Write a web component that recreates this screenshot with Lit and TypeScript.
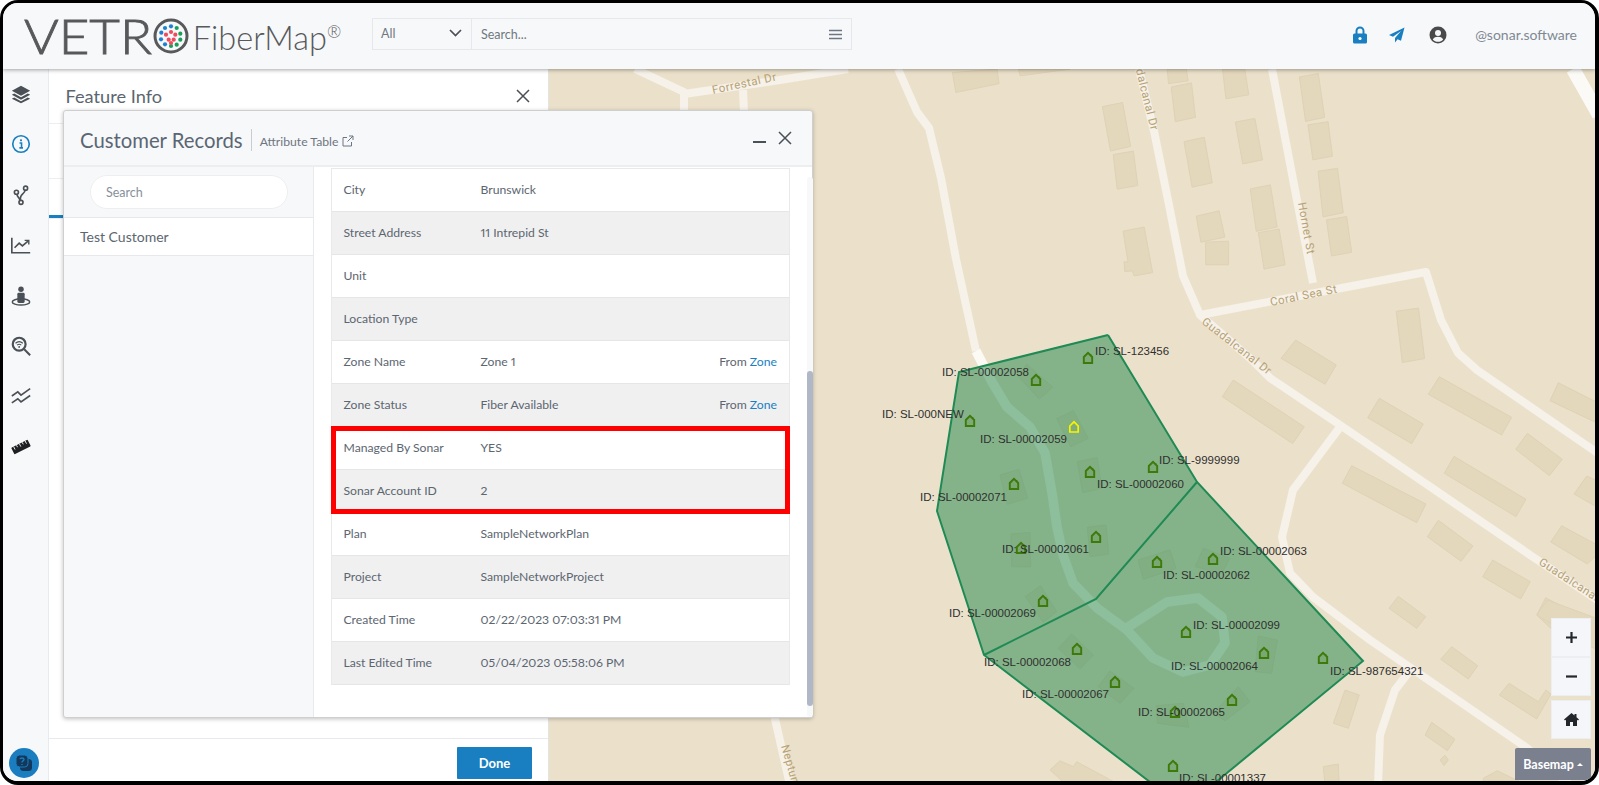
import { LitElement, html, css, svg } from 'lit';
import { customElement } from 'lit/decorators.js';

// buildings are read off crops of the map: [originX, originY, scale, points]
const BUILDINGS: [number, number, number, number[]][] = [
  [540, 60, 2.958, [1220, 37, 1352, 27, 1358, 70, 1230, 96]],
  [540, 60, 2.958, [1415, 27, 1568, 27, 1420, 47]],
  [1070, 60, 2.964, [288, 27, 345, 27, 350, 62, 292, 70]],
  [1070, 60, 2.964, [300, 80, 360, 68, 372, 170, 312, 183]],
  [1070, 60, 2.964, [452, 27, 518, 27, 530, 103, 462, 115]],
  [1070, 60, 2.964, [680, 50, 736, 40, 755, 170, 698, 182]],
  [1070, 60, 2.964, [705, 192, 765, 183, 778, 285, 720, 296]],
  [1070, 60, 2.964, [96, 138, 156, 126, 180, 256, 120, 270]],
  [1070, 60, 2.964, [128, 280, 188, 270, 201, 372, 140, 383]],
  [1070, 60, 2.964, [338, 242, 398, 229, 422, 364, 362, 377]],
  [1070, 60, 2.964, [490, 184, 548, 173, 571, 296, 512, 308]],
  [1070, 60, 2.964, [735, 330, 793, 321, 810, 453, 750, 465]],
  [1070, 60, 2.964, [760, 474, 820, 464, 835, 570, 775, 581]],
  [1070, 60, 2.964, [534, 382, 594, 370, 614, 495, 552, 508]],
  [1070, 60, 2.964, [558, 512, 620, 501, 638, 607, 575, 620]],
  [1070, 60, 2.964, [374, 463, 442, 447, 459, 525, 388, 540]],
  [1070, 60, 2.964, [402, 540, 470, 537, 470, 607, 402, 607]],
  [1070, 60, 2.964, [157, 507, 220, 495, 245, 630, 190, 640, 185, 625, 162, 627, 160, 598, 172, 598]],
  [1070, 60, 2.964, [967, 745, 1033, 735, 1051, 885, 985, 897]],
  [1180, 340, 3, [303, 55, 347, 0, 469, 75, 435, 133]],
  [1180, 340, 3, [127, 170, 160, 120, 373, 260, 338, 311]],
  [1180, 340, 3, [563, 233, 598, 175, 730, 252, 695, 311]],
  [1180, 340, 3, [745, 163, 778, 110, 995, 232, 965, 285]],
  [1180, 340, 3, [1007, 328, 1042, 280, 1147, 358, 1108, 407]],
  [1180, 340, 3, [1110, 182, 1135, 128, 1257, 190, 1257, 252]],
  [1180, 340, 3, [1182, 462, 1220, 408, 1257, 425, 1257, 505]],
  [1180, 340, 3, [487, 430, 515, 377, 738, 492, 710, 548]],
  [1180, 340, 3, [793, 400, 822, 349, 1038, 478, 1008, 530]],
  [1180, 340, 3, [742, 590, 775, 541, 879, 618, 843, 664]],
  [1180, 340, 3, [908, 710, 938, 660, 1051, 725, 1022, 777]],
  [1180, 340, 3, [1112, 606, 1145, 557, 1257, 618, 1257, 640, 1222, 672]],
  [1180, 340, 3, [627, 805, 655, 769, 737, 830, 710, 865]],
  [1180, 340, 3, [1070, 825, 1097, 773, 1257, 860, 1257, 900, 1150, 900]],
  [1440, 600, 3, [290, 45, 322, 0, 470, 55, 470, 150]],
  [1440, 600, 3, [2, 178, 35, 140, 113, 197, 85, 237]],
  [1440, 600, 3, [178, 285, 207, 250, 295, 305, 318, 270, 333, 282, 290, 357]],
  [1440, 600, 3, [-25, 367, 0, 385, 45, 418, 22, 452, -45, 405]],
  [1440, 600, 3, [0, 480, 15, 466, 25, 480, 12, 497]],
  [1440, 600, 3, [130, 535, 172, 512, 240, 545, 130, 560]],
  [920, 540, 3, [1275, 450, 1318, 465, 1285, 565, 1240, 550]],
  [920, 540, 3, [1210, 680, 1255, 672, 1258, 735, 1215, 735]],
  [920, 540, 3, [390, 690, 420, 662, 460, 680, 470, 665, 600, 735, 440, 735]],
  [860, 320, 3, [500, 132, 578, 202, 538, 237, 475, 170]],
  [860, 320, 3, [590, 296, 640, 272, 685, 355, 632, 380]],
  [860, 320, 3, [652, 425, 712, 413, 725, 505, 668, 518]],
  [860, 320, 3, [420, 465, 477, 448, 503, 535, 442, 553]],
  [860, 320, 3, [453, 642, 510, 637, 512, 740, 455, 740]],
  [860, 320, 3, [682, 622, 738, 615, 746, 702, 690, 710]],
  [860, 320, 3, [835, 725, 925, 690, 947, 745, 855, 775]],
  [920, 540, 3, [655, 60, 750, 30, 768, 85, 670, 118]],
  [920, 540, 3, [826, 80, 850, 25, 930, 55, 905, 100]],
  [920, 540, 3, [316, 170, 362, 137, 410, 215, 370, 247]],
  [920, 540, 3, [415, 325, 455, 282, 520, 345, 480, 387]],
  [920, 540, 3, [535, 440, 570, 393, 642, 445, 600, 490]],
  [920, 540, 3, [710, 497, 790, 490, 807, 562, 712, 550]],
  [920, 540, 3, [880, 520, 955, 440, 990, 485, 915, 542]],
  [920, 540, 3, [1015, 288, 1072, 300, 1055, 400, 1005, 395]],
];

const ROADS = [
  '635,69 684,92 684,112',
  '684,94 780,80 848,69',
  '743,90 744,112',
  '765,680 775,719 790,785',
  '898,69 917,112 929,128 941,178 956,259 976,351',
  '1139,69 1154,131 1169,205 1183,276 1200,315 1252,360 1270,378 1340,425 1533,557 1599,601',
  '1272,69 1296,195 1313,283',
  '1200,315 1426,272 1441,320 1458,353 1477,370 1599,454',
  '1340,427 1293,490 1282,537 1290,573 1313,597 1370,640 1440,688 1527,748 1570,785',
  '1412,668 1395,690 1380,735 1378,785',
];

// the street that runs under the service area reads wider and paler there
const INNER_ROAD = '976,351 992,382 1007,407 1030,427 1045,453 1052,493 1057,527 1063,555 1073,583 1097,608 1127,630 1153,658 1183,672 1210,665 1225,643 1222,617 1198,598 1167,602 1128,627';

const ROAD_LABELS: [string, number, number, number, string][] = [
  ['Forrestal Dr', 713, 94, -12, 'start'],
  ['Coral Sea St', 1271, 306, -11.5, 'start'],
  ['Hornet St', 1298, 203, 80, 'start'],
  ['Guadalcanal Dr', 1151, 131, 76, 'end'],
  ['Guadalcanal Dr', 1201, 323, 38, 'start'],
  ['Guadalcanal', 1538, 564, 33, 'start'],
  ['Neptune', 781, 746, 74, 'start'],
];

const HOUSES = [
  [1088, 358], [1036, 380], [970, 421], [1090, 472], [1153, 467], [1014, 484], [1096, 537], [1021, 548],
  [1157, 562], [1213, 559], [1043, 601], [1186, 632], [1077, 649], [1264, 653], [1323, 658], [1115, 682],
  [1232, 700], [1175, 712], [1173, 766],
];

const LABELS: [string, number, number][] = [
  ['ID: SL-123456', 1095, 351], ['ID: SL-00002058', 942, 372], ['ID: SL-000NEW', 882, 414],
  ['ID: SL-00002059', 980, 439], ['ID: SL-9999999', 1159, 460], ['ID: SL-00002060', 1097, 484],
  ['ID: SL-00002071', 920, 497], ['ID: SL-00002061', 1002, 549], ['ID: SL-00002063', 1220, 551],
  ['ID: SL-00002062', 1163, 575], ['ID: SL-00002069', 949, 613], ['ID: SL-00002099', 1193, 625],
  ['ID: SL-00002068', 984, 662], ['ID: SL-00002064', 1171, 666], ['ID: SL-987654321', 1330, 671],
  ['ID: SL-00002067', 1022, 694], ['ID: SL-00002065', 1138, 712], ['ID: SL-00001337', 1179, 778],
];

const ROWS: [string, string, boolean?][] = [
  ['City', 'Brunswick'],
  ['Street Address', '11 Intrepid St'],
  ['Unit', ''],
  ['Location Type', ''],
  ['Zone Name', 'Zone 1', true],
  ['Zone Status', 'Fiber Available', true],
  ['Managed By Sonar', 'YES'],
  ['Sonar Account ID', '2'],
  ['Plan', 'SampleNetworkPlan'],
  ['Project', 'SampleNetworkProject'],
  ['Created Time', '02/22/2023 07:03:31 PM'],
  ['Last Edited Time', '05/04/2023 05:58:06 PM'],
];

// fibre dots in the logo's O, relative to its centre
const DOTS: [number, number, string][] = [
  [0, -9.7, '#1f7fd0'], [-6, -8, '#1f7fd0'], [-9.7, -3.3, '#1f7fd0'], [-10, 3.3, '#1f7fd0'], [-6, 8.3, '#1f7fd0'],
  [5.7, -8, '#17a05a'], [9.3, -2.3, '#17a05a'], [9.3, 3.7, '#17a05a'], [5.7, 8.7, '#17a05a'], [0, 10, '#17a05a'],
  [0, -4, '#ee4c5c'], [-5, -1.3, '#ee4c5c'], [4.3, -1.3, '#ee4c5c'], [-2.3, 3.7, '#ee4c5c'], [2.7, 3.7, '#ee4c5c'], [0, 7, '#ee4c5c'],
];

const SIDE_ICONS = [
  svg`<path fill="#4b5056" d="M12 3l10 5.5L12 14 2 8.5z"/><path fill="#4b5056" d="M4.6 11.4l7.4 4.1 7.4-4.1 2.6 1.4-10 5.5-10-5.5z"/><path fill="#4b5056" d="M4.6 15.7l7.4 4.1 7.4-4.1 2.6 1.4-10 5-10-5z"/>`,
  svg`<circle cx="12" cy="12" r="9" fill="none" stroke="#1a7fc1" stroke-width="1.8"/><circle cx="12" cy="8" r="1.2" fill="#1a7fc1"/><path d="M10.4 11h2.2v5M10.2 16.2h4" fill="none" stroke="#1a7fc1" stroke-width="1.7"/>`,
  svg`<g fill="none" stroke="#4b5056" stroke-width="1.8"><circle cx="17" cy="4.5" r="2.2"/><circle cx="7" cy="9" r="2.2"/><circle cx="12" cy="20" r="2.2"/><path d="M16.5 6.8c-.5 5-6.500 3.500-5 11M7.500 11.200c.5 3 3 4 3.500 6.800"/></g>`,
  svg`<g fill="none" stroke="#4b5056" stroke-width="1.8"><path d="M2 4v16.500h20"/><path d="M5 15l5-5 3.500 3L20 7.500"/><path d="M16 7h4.500v4.500" stroke-width="1.500"/></g>`,
  svg`<circle cx="12" cy="4.500" r="3" fill="#4b5056"/><rect x="8" y="8.500" width="8" height="11" rx="1.500" fill="#4b5056"/><ellipse cx="12" cy="18.500" rx="9.500" ry="3.400" fill="none" stroke="#4b5056" stroke-width="1.600"/>`,
  svg`<g fill="none" stroke="#4b5056"><circle cx="10" cy="10" r="7" stroke-width="2.400"/><path d="M15.500 15.500L22 22" stroke-width="2.200"/><path d="M6 9c2.500-2.300 5.500-2.300 8 0M7.700 11c1.500-1.200 3.100-1.200 4.600 0" stroke-width="1.200"/></g><circle cx="10" cy="13" r="1" fill="#4b5056"/>`,
  svg`<g fill="none" stroke="#4b5056" stroke-width="1.800"><path d="M2 12l6.500-4.500 3.500 3.500L22 4"/><path d="M2 19.500l6.500-4.500 3.500 3.500L22 11.500"/></g>`,
  svg`<g transform="rotate(-27 12 12)"><rect x="2" y="8" width="20" height="8" rx=".8" fill="#1d1f22"/><path d="M5 8v3.500M8.500 8v2.500M12 8v3.500M15.500 8v2.500M19 8v3.500" stroke="#fff" stroke-width=".9"/></g>`,
];

@customElement('app-root')
export class AppRoot extends LitElement {
  static styles = css`
    :host {
      display: block;
      width: 1599px;
      height: 785px;
      font-family: 'Lato', 'Liberation Sans', sans-serif;
      color: #5c6670;
    }
    svg { display: block; }
    .shell {
      position: relative;
      box-sizing: border-box;
      height: 785px;
      border: solid #000;
      border-width: 3px 4px 4px 3px;
      border-radius: 18px;
      overflow: hidden;
      display: flex;
      flex-direction: column;
      background: #fff;
    }
    .topbar {
      position: relative;
      z-index: 3;
      flex: 0 0 66px;
      display: flex;
      align-items: center;
      background: #f7f8fa;
      box-shadow: 0 1px 4px rgba(0, 0, 0, .35);
    }
    .logo {
      display: flex;
      align-items: center;
      width: 366px;
      padding-left: 21px;
      box-sizing: border-box;
      color: #58595b;
    }
    /* the wordmark is wider than any installed face, so the letters are stretched */
    .vetro {
      font-size: 47px;
      font-weight: 300;
      line-height: 50px;
      -webkit-text-stroke: .8px #58595b;
      transform: scaleX(1.125);
      transform-origin: left center;
      margin-right: 15px;
    }
    .fiber { font-size: 32.500px; font-weight: 300; line-height: 40px; margin: 3px 0 0 4px; }
    .reg { font-size: 17px; font-weight: 300; align-self: flex-start; margin-top: 11px; line-height: 20px; }
    .search {
      display: flex;
      width: 480px;
      height: 32px;
      margin: 0 0 4px 3px;
      box-sizing: border-box;
      border: 1px solid #e6e8eb;
      font-size: 12.500px;
      color: #6f7880;
    }
    .search-all {
      flex: 0 0 99px;
      display: flex;
      align-items: center;
      justify-content: space-between;
      padding: 0 9px 2px 8px;
      box-sizing: border-box;
      border-right: 1px solid #e6e8eb;
    }
    .search-text {
      flex: 1;
      display: flex;
      align-items: center;
      justify-content: space-between;
      padding: 0 9px;
    }
    .top-right {
      margin: 0 0 3px auto;
      display: flex;
      align-items: center;
      padding-right: 18px;
    }
    .user-name { font-size: 14px; color: #7f8993; margin-left: 28px; }
    .main { flex: 1; display: flex; min-height: 0; }
    .sidebar {
      flex: 0 0 45.500px;
      box-sizing: border-box;
      background: #f7f8fa;
      border-right: 1px solid #e8eaed;
      display: flex;
      flex-direction: column;
      align-items: center;
      padding: 14px 9px 0 0;
      gap: 28.400px;
    }
    .help {
      position: absolute;
      left: 6px;
      bottom: 3px;
      width: 30px;
      height: 30px;
      border-radius: 50%;
      background: #1a7dc0;
      display: flex;
      align-items: center;
      justify-content: center;
    }
    .panel {
      flex: 0 0 500.500px;
      box-sizing: border-box;
      background: #fff;
      border-right: 1px solid #e3e3e3;
      display: flex;
      flex-direction: column;
    }
    .panel-head {
      flex: 0 0 55px;
      box-sizing: border-box;
      display: flex;
      justify-content: space-between;
      align-items: center;
      padding: 0 18px 0 17px;
      border-bottom: 1px solid #eceef0;
      font-size: 18.200px;
    }
    .panel-sub { flex: 0 0 55px; box-sizing: border-box; border-bottom: 1px solid #eceef0; }
    .panel-tabs { flex: 0 0 40px; box-sizing: border-box; display: flex; align-items: flex-end; border-bottom: 1px solid #eceef0; }
    .tab-line { width: 15px; height: 3px; background: #1a7fc1; }
    .panel-rest { flex: 1; }
    .panel-foot {
      flex: 0 0 43px;
      box-sizing: border-box;
      border-top: 1px solid #e8eaed;
      display: flex;
      justify-content: flex-end;
      padding: 8px 16px 0 0;
    }
    .done {
      width: 75px;
      height: 32px;
      background: #1a7fc1;
      color: #fff;
      font-size: 13px;
      font-weight: 700;
      display: flex;
      align-items: center;
      justify-content: center;
      border-radius: 1px;
    }
    .map { flex: 1; position: relative; overflow: hidden; background: #ebe1cb; }
    .road-label { font-family: 'Roboto', 'Liberation Sans', sans-serif; font-size: 11.500px; letter-spacing: .5px; fill: #b7a273; }
    .feat-label { font-family: 'Liberation Sans', sans-serif; font-size: 11.500px; fill: #2f2f2f; }
    .map-btns {
      position: absolute;
      right: 4px;
      bottom: 42px;
      display: flex;
      flex-direction: column;
      width: 40px;
    }
    .map-btn {
      height: 39px;
      box-sizing: border-box;
      background: #f5f6fa;
      border: 1px solid #eceef2;
      display: flex;
      align-items: center;
      justify-content: center;
    }
    .map-btn.sep { margin-top: 4px; }
    .basemap {
      position: absolute;
      right: 4px;
      bottom: 1px;
      width: 76px;
      height: 32px;
      background: #7b808f;
      color: #fff;
      font-size: 12.500px;
      font-weight: 700;
      display: flex;
      align-items: center;
      justify-content: center;
      gap: 3px;
      border-radius: 2px 2px 0 0;
    }
    .caret { width: 0; height: 0; border: 3.500px solid transparent; border-top: 0; border-bottom: 3.500px solid #fff; }
    .modal {
      position: absolute;
      z-index: 2;
      left: 60px;
      top: 107px;
      width: 750px;
      height: 608px;
      box-sizing: border-box;
      background: #f7f8fa;
      border: 1px solid #cfcfcf;
      border-radius: 3px;
      box-shadow: 0 1px 4px rgba(0, 0, 0, .25);
      display: flex;
      flex-direction: column;
    }
    .modal-head {
      flex: 0 0 56px;
      box-sizing: border-box;
      display: flex;
      align-items: center;
      padding: 0 20px 0 16px;
      border-bottom: 2px solid #eceef0;
    }
    .modal-title { font-size: 20.300px; color: #5a6673; padding-right: 8px; border-right: 1px solid #c9cdd1; line-height: 22px; margin-top: 3px; }
    .attr { font-size: 12.200px; color: #6d7680; margin: 6px 0 0 8px; display: flex; align-items: center; gap: 4px; }
    .modal-actions { margin-left: auto; display: flex; align-items: center; gap: 12px; }
    .modal-body { flex: 1; display: flex; min-height: 0; }
    .left { flex: 0 0 250px; box-sizing: border-box; border-right: 1px solid #e8eaed; display: flex; flex-direction: column; }
    .pill-wrap { flex: 0 0 51px; box-sizing: border-box; padding: 8px 25px 0 26px; border-bottom: 1px solid #e6e8eb; }
    .pill {
      height: 34px;
      box-sizing: border-box;
      background: #fff;
      border: 1px solid #eceef0;
      border-radius: 17px;
      display: flex;
      align-items: center;
      padding-left: 15px;
      font-size: 12.500px;
      color: #87909a;
    }
    .cust {
      flex: 0 0 38px;
      box-sizing: border-box;
      background: #fff;
      border-bottom: 1px solid #e6e8eb;
      display: flex;
      align-items: center;
      padding-left: 16px;
      font-size: 14px;
    }
    .right {
      position: relative;
      flex: 1;
      background: #fff;
      display: flex;
      padding: 1px 0 0 17px;
      min-width: 0;
    }
    .table { flex: 0 0 459px; align-self: flex-start; border: solid #e9e9e9; border-width: 1px 1px 0 1px; box-sizing: border-box; }
    .row {
      height: 43px;
      box-sizing: border-box;
      border-bottom: 1px solid #e6e6e6;
      display: flex;
      align-items: center;
      font-size: 12.200px;
      font-variant-numeric: proportional-nums;
      padding: 0 12px 2px 11.500px;
    }
    .row:nth-child(even) { background: #f0f0f0; }
    .row-label { flex: 0 0 137px; }
    .row-value { flex: 1; }
    .zone { color: #1a7fc1; }
    .track { flex: 0 0 6px; margin: 9px 0 0 16.500px; background: #f7f8fa; border-radius: 3px; display: flex; flex-direction: column; }
    .thumb { height: 335px; margin-top: 194px; background: #b0b7c6; border-radius: 3px; }
    .highlight {
      position: absolute;
      left: 17px;
      top: 259px;
      width: 459px;
      height: 88px;
      box-sizing: border-box;
      border: 5px solid #f00;
    }
  `;

  renderLogoO() {
    return html`<svg width="36" height="36" viewBox="-18 -18 36 36">
      <circle r="16" fill="none" stroke="#58595b" stroke-width="3"></circle>
      ${DOTS.map(d => svg`<circle cx=${d[0]} cy=${d[1]} r="2.100" fill=${d[2]}></circle>`)}
    </svg>`;
  }

  renderMap() {
    const quad = (b: [number, number, number, number[]]) =>
      b[3].map((n, i) => (n / b[2] + (i % 2 ? b[1] : b[0])).toFixed(1)).join(',');
    return html`<svg width="1046" height="712" viewBox="549 69 1046 712">
      ${ROADS.map(r => svg`<polyline points=${r} fill="none" stroke="#f6f1e9" stroke-width="8" stroke-linejoin="round"></polyline>`)}
      <polyline points=${INNER_ROAD} fill="none" stroke="#fcfaf5" stroke-width="9.500" stroke-linejoin="round"></polyline>
      <polyline points="1573,69 1599,115" fill="none" stroke="#fbfaf7" stroke-width="14"></polyline>
      ${BUILDINGS.map(b => svg`<polygon points=${quad(b)} fill="#e3d7bc" stroke="#dfd2b6" stroke-width="1"></polygon>`)}
      ${ROAD_LABELS.map(l => svg`<text class="road-label" x=${l[1]} y=${l[2]} text-anchor=${l[4]} transform="rotate(${l[3]} ${l[1]} ${l[2]})">${l[0]}</text>`)}
      <polygon points="1108,335 959,372 937,511 984,655 1096,599 1197,482" fill="#2a8a50" fill-opacity=".53"></polygon>
      <polygon points="1197,482 1363,661 1216,782 1150,782 984,655 1096,599" fill="#2a8a50" fill-opacity=".53"></polygon>
      <path d="M1108 335L959 372L937 511L984 655L1150 782M1216 782L1363 661L1197 482L1108 335M984 655L1096 599L1197 482" fill="none" stroke="#1f8a55" stroke-width="2"></path>
      ${HOUSES.map(h => svg`<path transform="translate(${h[0]} ${h[1]})" d="M-4.200 5V-1L0-5.200 4.200-1V5ZM2.500-4V-2" fill="#6c9e55" fill-opacity=".35" stroke="#3d7a0a" stroke-width="1.900"></path>`)}
      <path transform="translate(1074 427)" d="M-4.200 5V-1L0-5.200 4.200-1V5Z" fill="#8aa96a" fill-opacity=".5" stroke="#f5f500" stroke-width="1.700"></path>
      ${LABELS.map(l => svg`<text class="feat-label" x=${l[1]} y=${l[2] + 4}>${l[0]}</text>`)}
    </svg>`;
  }

  render() {
    return html`
      <div class="shell">
        <div class="topbar">
          <div class="logo">
            <span class="vetro">VETR</span>${this.renderLogoO()}<span class="fiber">FiberMap</span><span class="reg">®</span>
          </div>
          <div class="search">
            <div class="search-all">
              <span>All</span>
              <svg width="13" height="8" viewBox="0 0 13 8"><path d="M1 1l5.500 5.500L12 1" fill="none" stroke="#4b5056" stroke-width="1.700"></path></svg>
            </div>
            <div class="search-text">
              <span>Search...</span>
              <svg width="13" height="11" viewBox="0 0 13 11"><path d="M0 1.500h13M0 5.500h13M0 9.500h13" stroke="#6d7680" stroke-width="1.500"></path></svg>
            </div>
          </div>
          <div class="top-right">
            <svg width="14" height="18" viewBox="0 0 14 18" style="margin-right:22px">
              <path d="M3.500 8V5a3.500 3.500 0 017 0v3" fill="none" stroke="#1a7fc1" stroke-width="2"></path>
              <rect y="7.500" width="14" height="10" rx="1.500" fill="#1a7fc1"></rect>
              <circle cx="7" cy="12.500" r="1.600" fill="#fff"></circle>
            </svg>
            <svg width="16" height="16" viewBox="0 0 16 16" style="margin-right:24px">
              <path d="M15.500.500L0 8l4 1.800L12 4 6 11v4.500l2.600-3.300 3.400 1.500z" fill="#1a7fc1"></path>
            </svg>
            <svg width="18" height="18" viewBox="0 0 18 18">
              <circle cx="9" cy="9" r="8.500" fill="#4a4a4a"></circle>
              <circle cx="9" cy="7" r="3" fill="#f7f8fa"></circle>
              <path d="M3.800 13.500c1-2 3-2.700 5.200-2.700s4.200.7 5.200 2.700c-1.300 1.500-3.100 2.300-5.200 2.300s-3.900-.8-5.200-2.300z" fill="#f7f8fa"></path>
            </svg>
            <span class="user-name">@sonar.software</span>
          </div>
        </div>
        <div class="main">
          <div class="sidebar">
            ${SIDE_ICONS.map(i => html`<svg width="22" height="22" viewBox="0 0 24 24">${i}</svg>`)}
          </div>
          <div class="panel">
            <div class="panel-head">
              <span>Feature Info</span>
              <svg width="14" height="14" viewBox="0 0 14 14"><path d="M1 1l12 12M13 1L1 13" stroke="#4b5056" stroke-width="1.500"></path></svg>
            </div>
            <div class="panel-sub"></div>
            <div class="panel-tabs"><div class="tab-line"></div></div>
            <div class="panel-rest"></div>
            <div class="panel-foot"><div class="done">Done</div></div>
          </div>
          <div class="map">
            ${this.renderMap()}
            <div class="map-btns">
              <div class="map-btn"><svg width="13" height="13" viewBox="0 0 13 13"><path d="M6.500 1v11M1 6.500h11" stroke="#23272b" stroke-width="2.200"></path></svg></div>
              <div class="map-btn"><svg width="13" height="13" viewBox="0 0 13 13"><path d="M1 6.500h11" stroke="#23272b" stroke-width="2.200"></path></svg></div>
              <div class="map-btn sep"><svg width="15" height="13" viewBox="0 0 15 13"><path d="M7.500 0L0 6.500l1 1L2 6.700V13h4V9h3v4h4V6.700l1 .8 1-1L12.500 4.300V1h-2v1.500z" fill="#23272b"></path></svg></div>
            </div>
            <div class="basemap">Basemap<span class="caret"></span></div>
          </div>
        </div>
        <div class="help">
          <svg width="18" height="18" viewBox="0 0 18 18">
            <rect x="5" y="5" width="12" height="12" rx="3.500" fill="#12395c"></rect>
            <rect x="1" y="1" width="12" height="12" rx="3.500" fill="#12395c" stroke="#1a7dc0" stroke-width="1"></rect>
            <path d="M5 5.200c.2-1.500 3.800-1.700 4 .2 0 1.500-2 1.500-2 3M7 10v1" fill="none" stroke="#1a7dc0" stroke-width="1.400"></path>
          </svg>
        </div>
        <div class="modal">
          <div class="modal-head">
            <span class="modal-title">Customer Records</span>
            <span class="attr">Attribute Table
              <svg width="12" height="12" viewBox="0 0 12 12"><path d="M9.500 7v4H1V2.500h4M7 1h4v4M11 1L5.500 6.500" fill="none" stroke="#6d7680" stroke-width="1"></path></svg>
            </span>
            <div class="modal-actions">
              <svg width="13" height="13" viewBox="0 0 13 13"><path d="M0 10h13" stroke="#4b5056" stroke-width="2"></path></svg>
              <svg width="14" height="14" viewBox="0 0 14 14"><path d="M1 1l12 12M13 1L1 13" stroke="#4b5056" stroke-width="1.500"></path></svg>
            </div>
          </div>
          <div class="modal-body">
            <div class="left">
              <div class="pill-wrap"><div class="pill">Search</div></div>
              <div class="cust">Test Customer</div>
            </div>
            <div class="right">
              <div class="table">
                ${ROWS.map(r => html`<div class="row">
                  <span class="row-label">${r[0]}</span>
                  <span class="row-value">${r[1]}</span>
                  ${r[2] ? html`<span>From <span class="zone">Zone</span></span>` : ''}
                </div>`)}
              </div>
              <div class="track"><div class="thumb"></div></div>
              <div class="highlight"></div>
            </div>
          </div>
        </div>
      </div>
    `;
  }
}
